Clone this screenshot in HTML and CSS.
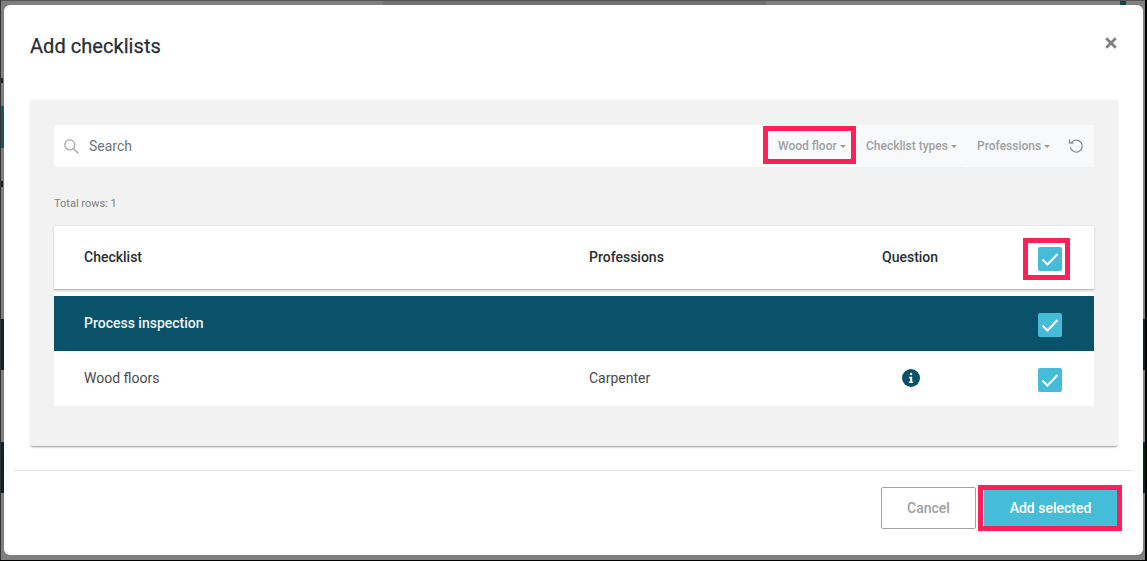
FILE: index.html
```html
<!DOCTYPE html>
<html lang="en">
<head>
<meta charset="utf-8">
<title>Add checklists</title>
<link rel="stylesheet" href="styles.css">
</head>
<body>
<div class="modal">
  <header class="modal-head">
    <h1 class="modal-title">Add checklists</h1>
    <svg class="close" viewBox="0 0 12 12" aria-label="Close"><path d="M1.2 1.2l9.6 9.6M10.8 1.2l-9.6 9.6"/></svg>
  </header>
  <section class="panel">
    <div class="filters">
      <div class="search">
        <svg class="search-icon" viewBox="0 0 15 15"><circle cx="5.8" cy="5.8" r="5"/><path d="M9.4 9.4l5 5"/></svg>
        <span class="search-text">Search</span>
      </div>
      <div class="filter filter-first"><span>Wood floor</span><i class="caret"></i></div>
      <div class="filter filter-types"><span>Checklist types</span><i class="caret"></i></div>
      <div class="filter filter-prof"><span>Professions</span><i class="caret"></i></div>
      <div class="reset">
        <svg viewBox="0 0 16 16"><path d="M3.4 4.6A6 6 0 1 1 2.4 9.4"/><path d="M1.6 1.4v3.8h3.8"/></svg>
      </div>
    </div>
    <p class="total">Total rows: 1</p>
    <div class="table">
      <div class="row row-head">
        <div class="c-name">Checklist</div>
        <div class="c-prof">Professions</div>
        <div class="c-q">Question</div>
        <div class="c-check"><span class="mark-box"><span class="check"><svg viewBox="0 0 24 24"><path d="M4.5 12.5l5 5L19.5 7"/></svg></span></span></div>
      </div>
      <div class="row row-group">
        <div class="c-name">Process inspection</div>
        <div class="c-prof"></div>
        <div class="c-q"></div>
        <div class="c-check"><span class="check"><svg viewBox="0 0 24 24"><path d="M4.5 12.5l5 5L19.5 7"/></svg></span></div>
      </div>
      <div class="row row-item">
        <div class="c-name">Wood floors</div>
        <div class="c-prof">Carpenter</div>
        <div class="c-q">
          <svg class="info" viewBox="0 0 18 18"><circle cx="9" cy="9" r="9"/><rect x="7.8" y="3.8" width="2.5" height="2.4" rx="1.1"/><path d="M7 7.8h3.2v4.8h1v1.5H6.9v-1.5h1.1V9.3H7z"/></svg>
        </div>
        <div class="c-check"><span class="check"><svg viewBox="0 0 24 24"><path d="M4.5 12.5l5 5L19.5 7"/></svg></span></div>
      </div>
    </div>
  </section>
  <footer class="modal-foot">
    <button class="btn btn-cancel" type="button">Cancel</button>
    <span class="mark-btn"><button class="btn btn-add" type="button">Add selected</button></span>
  </footer>
</div>
</body>
</html>
```
FILE: styles.css
```css
* { box-sizing: border-box; }
html, body { margin: 0; height: 100%; }
body {
  width: 1147px;
  height: 561px;
  overflow: hidden;
  background-color: #7f7f7f;
  background-repeat: no-repeat;
  background-image:
    linear-gradient(#0d5a6e, #0d5a6e),
    linear-gradient(#05252f, #05252f),
    linear-gradient(#04262f, #04262f),
    linear-gradient(#05252f, #05252f),
    linear-gradient(#04262f, #04262f),
    linear-gradient(#727272, #727272),
    linear-gradient(#0a4a4e, #0a4a4e),
    linear-gradient(#222, #222),
    linear-gradient(#222, #222);
  background-position:
    0 106px,
    0 319px,
    0 442px,
    1143px 319px,
    1143px 442px,
    383px 0,
    1120px 1px,
    0 78px,
    0 181px;
  background-size:
    4px 42px,
    4px 51px,
    4px 51px,
    2px 51px,
    2px 51px,
    383px 5px,
    6px 4px,
    3px 5px,
    3px 6px;
  box-shadow: inset -2px 0 #000, inset 0 -1px #000, inset 1px 0 #333, inset 0 1px #555;
  font-family: Roboto, "Liberation Sans", sans-serif;
  color: #212529;
  padding: 5px 4px 6px;
}
.modal {
  width: 1139px;
  height: 550px;
  background: #fff;
  border-radius: 6px;
  display: flex;
  flex-direction: column;
}
.modal-head {
  height: 95px;
  padding: 28px 26px 0 26px;
  display: flex;
  justify-content: space-between;
  align-items: flex-start;
}
.modal-title {
  margin: 0;
  font-size: 20px;
  line-height: 26px;
  font-weight: 400;
  color: #2a2e32;
  -webkit-text-stroke: 0.25px #2a2e32;
  letter-spacing: 0.05px;
}
.close { width: 12px; height: 12px; margin-top: 4px; }
.close path { stroke: #808080; stroke-width: 2.8; fill: none; }
.panel {
  margin: 0 25px 0 26px;
  height: 346px;
  background: #f2f2f2;
  border-radius: 2px;
  box-shadow: 0 2px 2px -1px rgba(0,0,0,.4), 0 0 1px rgba(0,0,0,.12);
  padding: 25px 24px 0;
}
.filters {
  height: 42px;
  display: flex;
  align-items: stretch;
  background: #fff;
  border-radius: 3px;
}
.search {
  flex: 1;
  display: flex;
  align-items: center;
  padding-left: 10px;
}
.search-icon { width: 15px; height: 15px; margin-right: 10px; }
.search-icon circle, .search-icon path { fill: none; stroke: #b5b5b5; stroke-width: 1.6; }
.search-text { font-size: 14px; color: #6c757d; }
.filter {
  display: flex;
  align-items: center;
  background: #f8f9fa;
  font-size: 12px;
  font-weight: 500;
  color: #a0a0a0;
  border-radius: 3px;
}
.filter-first {
  width: 93px;
  height: 38px;
  margin-top: 1px;
  border: 5px solid #ff2058;
  border-radius: 0;
  padding: 2px 0 0 10px;
}
.filter-types { width: 110px; padding-left: 10px; }
.filter-prof { width: 92px; padding-left: 11px; }
.caret {
  width: 0;
  height: 0;
  margin-left: 3px;
  border-left: 3px solid transparent;
  border-right: 3px solid transparent;
  border-top: 3px solid #999;
}
.reset {
  width: 36px;
  background: #f8f9fa;
  border-radius: 0 3px 3px 0;
  display: flex;
  align-items: center;
  padding-left: 10px;
}
.reset svg { width: 16px; height: 16px; }
.reset path { fill: none; stroke: #8a8a8a; stroke-width: 1.3; }
.total {
  margin: 30px 0 0;
  height: 29px;
  font-size: 11px;
  line-height: 13px;
  color: #808080;
}
.table { background: #fff; box-shadow: 0 -1px 0 #e9e9e9; }
.row { display: flex; align-items: center; font-size: 14px; }
.row-head {
  height: 64px;
  font-weight: 500;
  color: #2a2e32;
  border-bottom: 1px solid #bdbdbd;
  padding-bottom: 1px;
  margin-bottom: 6px;
  box-shadow: 0 1px 2px rgba(0,0,0,.18);
}
.row-group { height: 55px; background: #0a5269; color: #eef3f5; font-weight: 500; }
.row-item { height: 55px; color: #4a4a4a; }
.row-group .c-name, .row-item .c-name, .row-item .c-prof { padding-bottom: 2px; }
.c-name { width: 535px; padding-left: 30px; }
.c-prof { width: 293px; }
.c-q { width: 110px; display: flex; justify-content: flex-start; }
.row-item .c-q { padding-left: 20px; padding-bottom: 2px; }
.c-check { flex: 1; display: flex; justify-content: flex-start; padding-left: 46px; padding-top: 2px; }
.row-head .c-check { padding-left: 31px; padding-top: 0; }
.check {
  width: 24px;
  height: 24px;
  background: #45bcd8;
  border-radius: 2px;
  display: block;
}
.check svg { width: 24px; height: 24px; display: block; }
.check path { fill: none; stroke: #fff; stroke-width: 2; }
.mark-box {
  display: block;
  border: 5px solid #ff2058;
  padding: 4px 8px 4px 10px;
  height: 42px;
  width: 47px;
  margin-top: 4px;
}
.info { width: 18px; height: 18px; display: block; }
.info circle { fill: #0a5269; }
.info rect, .info > path { fill: #fff; }
.modal-foot {
  margin: 24px 10px 0;
  border-top: 1px solid #e2e2e6;
  padding: 14px 11px 0 0;
  display: flex;
  justify-content: flex-end;
  align-items: center;
  gap: 2px;
}
.btn {
  font-family: inherit;
  font-size: 14px;
  font-weight: 500;
  margin: 0;
}
.btn-cancel {
  width: 95px;
  height: 42px;
  background: #fff;
  border: 1px solid #a0a0a0;
  border-radius: 2px;
  color: #a0a0a0;
}
.mark-btn { display: block; border: 5px solid #ff2058; height: 46px; width: 144px; }
.btn-add {
  display: block;
  width: 134px;
  height: 36px;
  background: #45bcd8;
  border: 0;
  border-left: 1px solid #fff;
  color: #fff;
}
```
